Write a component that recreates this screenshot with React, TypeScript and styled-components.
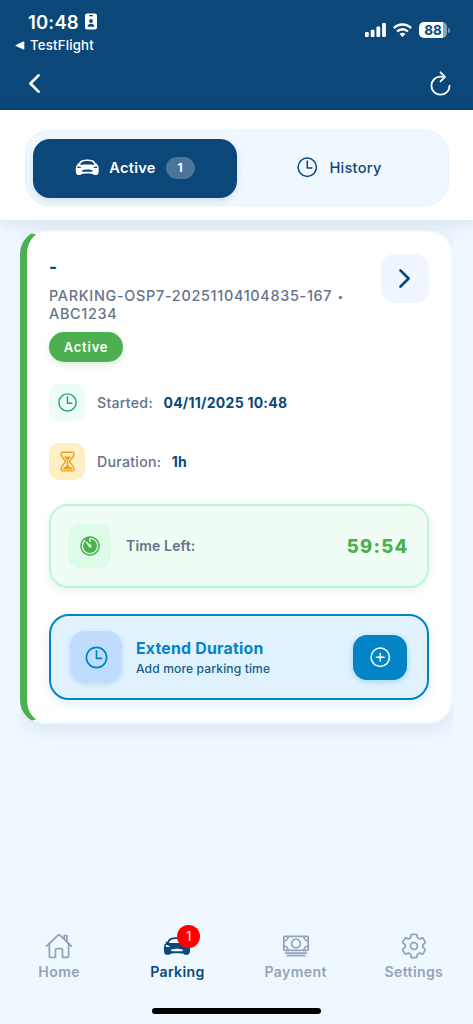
import React from 'react';
import styled, { createGlobalStyle } from 'styled-components';
import {
  IoAddCircleOutline,
  IoCarSport,
  IoCashOutline,
  IoChevronBack,
  IoChevronForward,
  IoHomeOutline,
  IoHourglassOutline,
  IoRefreshOutline,
  IoSettingsOutline,
  IoTimeOutline,
  IoTimer,
} from 'react-icons/io5';

const navy = '#0c477a';
const green = '#4caf50';
const blue = '#0284c7';
const slate = '#64748b';

const GlobalStyle = createGlobalStyle`
  * { box-sizing: border-box; }
  body { margin: 0; background: #f0f8ff; }
  svg { display: block; flex: none; }
`;

const Screen = styled.div`
  display: flex;
  flex-direction: column;
  width: 473px;
  height: 1024px;
  overflow: hidden;
  background: #f0f8ff;
  color: ${navy};
  font-family: Inter, 'Liberation Sans', sans-serif;
`;

const Header = styled.header`
  flex: none;
  height: 110px;
  background: ${navy};
  border-bottom: 1px solid #0a3d69;
  color: #fff;
`;

const StatusBar = styled.div`
  display: flex;
  justify-content: space-between;
  height: 58px;
  padding: 11px 23px 0 15px;
`;

const Clock = styled.div`
  display: flex;
  align-items: center;
  gap: 6px;
  height: 21px;
  padding-left: 13px;
  font-size: 18.5px;
  font-weight: 600;
  letter-spacing: 0.15px;
`;

const BackToApp = styled.div`
  display: flex;
  align-items: center;
  gap: 5px;
  height: 18px;
  margin-top: 4px;
  font-size: 13.2px;
  font-weight: 500;
  letter-spacing: 0.2px;
`;

const Indicators = styled.div`
  display: flex;
  align-items: center;
  gap: 7px;
  height: 38px;
`;

const Battery = styled.div`
  display: flex;
  align-items: center;
  gap: 1px;
`;

const BatteryBody = styled.div`
  width: 28px;
  height: 16px;
  border-radius: 5px;
  background: linear-gradient(90deg, #fff 87%, #88a6c0 87%);
  color: ${navy};
  font-size: 13.5px;
  font-weight: 700;
  line-height: 16px;
  text-align: center;
`;

const BatteryTip = styled.div`
  width: 2px;
  height: 5px;
  border-radius: 0 2px 2px 0;
  background: #7898b5;
`;

const NavRow = styled.div`
  display: flex;
  align-items: center;
  justify-content: space-between;
  height: 51px;
  padding: 0 18px 0 20px;
`;

const TabArea = styled.div`
  position: relative;
  flex: none;
  height: 110px;
  padding: 20px 24.5px 0;
  background: #fff;
  box-shadow: 0 5px 14px rgba(12, 71, 122, 0.1);
`;

const TabTrack = styled.div`
  display: flex;
  height: 76px;
  padding: 7.5px;
  border: 1px solid #e3f1fb;
  border-radius: 24px;
  background: #f0f8ff;
`;

const Tab = styled.button<{ $active?: boolean }>`
  display: flex;
  flex: 1;
  align-items: center;
  justify-content: center;
  gap: 10px;
  padding: 0 0 1px;
  border: 0;
  border-radius: 17px;
  background: ${(p) => (p.$active ? navy : 'transparent')};
  box-shadow: ${(p) => (p.$active ? '0 3px 7px rgba(12, 71, 122, 0.14)' : 'none')};
  color: ${(p) => (p.$active ? '#fff' : navy)};
  font-family: inherit;
  font-size: 14.6px;
  font-weight: ${(p) => (p.$active ? 600 : 500)};
  letter-spacing: 0.25px;
`;

const Count = styled.span`
  width: 29px;
  height: 22px;
  border-radius: 11px;
  background: rgba(255, 255, 255, 0.25);
  font-size: 12px;
  font-weight: 700;
  line-height: 22px;
`;

const Content = styled.main`
  flex: 1;
  padding: 10px 20px 0;
`;

const CardClip = styled.div`
  clip-path: inset(-30px 0);
`;

const Card = styled.section`
  height: 494px;
  padding: 22px 22.5px 0 22px;
  border: 2px solid #f0f8ff;
  border-left: 7px solid ${green};
  border-radius: 24px;
  background: #fff;
  background-clip: padding-box;
  box-shadow: 0 5px 18px rgba(12, 71, 122, 0.11);
`;

const CardTop = styled.div`
  display: flex;
  justify-content: space-between;
`;

const Place = styled.div`
  height: 33px;
  padding-top: 2px;
  font-size: 17px;
  font-weight: 800;
  line-height: 22px;
`;

const Reference = styled.div`
  color: ${slate};
  font-size: 14.4px;
  font-weight: 500;
  line-height: 18px;
  letter-spacing: 0.7px;
`;

const ReferenceDot = styled.span`
  display: inline-block;
  margin-left: 1px;
  font-size: 10px;
  line-height: 10px;
  vertical-align: 1px;
`;

const StatusPill = styled.div`
  width: 74px;
  height: 30px;
  margin-top: 9px;
  border-radius: 15px;
  background: ${green};
  box-shadow: 0 3px 7px rgba(76, 175, 80, 0.2);
  color: #fff;
  font-size: 13px;
  font-weight: 600;
  line-height: 30px;
  letter-spacing: 0.8px;
  text-align: center;
`;

const OpenButton = styled.button`
  display: flex;
  align-items: center;
  justify-content: center;
  width: 48px;
  height: 49px;
  padding: 0;
  border: 0;
  border-radius: 14px;
  background: #eff6ff;
  color: ${navy};
`;

const Facts = styled.div`
  display: flex;
  flex-direction: column;
  gap: 22px;
  margin-top: 22px;
`;

const Fact = styled.div`
  display: flex;
  align-items: center;
  height: 37px;
  font-size: 14.2px;
  line-height: 18px;
  letter-spacing: 0.25px;
`;

const IconTile = styled.div<{ $w: number; $h: number; $r: number; $bg: string; $fg: string; $raised?: boolean }>`
  display: flex;
  flex: none;
  align-items: center;
  justify-content: center;
  width: ${(p) => p.$w}px;
  height: ${(p) => p.$h}px;
  border-radius: ${(p) => p.$r}px;
  background: ${(p) => p.$bg};
  color: ${(p) => p.$fg};
  box-shadow: ${(p) => (p.$raised ? '0 2px 5px rgba(12, 71, 122, 0.13)' : 'none')};
`;

const Label = styled.span`
  margin-left: 12px;
  color: ${slate};
  font-weight: 500;
`;

const Value = styled.span`
  margin-left: 10.5px;
  font-size: 14px;
  font-weight: 700;
`;

const TimeLeft = styled.div`
  display: flex;
  align-items: center;
  height: 84px;
  margin-top: 24px;
  padding: 0 18px 0 17px;
  border: 2px solid #bbf7d0;
  border-radius: 19px;
  background: #f0fdf4;
  box-shadow: 0 3px 9px rgba(76, 175, 80, 0.12);
`;

const TimeLeftLabel = styled.span`
  margin-left: 15px;
  padding-bottom: 1px;
  color: ${slate};
  font-size: 14px;
  font-weight: 600;
  letter-spacing: 0.15px;
`;

const Countdown = styled.span`
  margin-left: auto;
  color: ${green};
  font-size: 18.4px;
  font-weight: 800;
  letter-spacing: 1.3px;
`;

const Extend = styled.div`
  display: flex;
  align-items: center;
  height: 86px;
  margin-top: 26px;
  padding: 0 20px 0 19px;
  border: 2px solid ${blue};
  border-radius: 20px;
  background: #e0f2fe;
  box-shadow: 0 4px 11px rgba(2, 132, 199, 0.13);
`;

const ExtendText = styled.div`
  margin: 2px 0 0 14px;
`;

const ExtendTitle = styled.div`
  color: ${blue};
  font-size: 15.8px;
  font-weight: 700;
  line-height: 20px;
  letter-spacing: 0.25px;
`;

const ExtendHint = styled.div`
  color: #155e87;
  font-size: 12.1px;
  font-weight: 500;
  line-height: 19px;
  letter-spacing: 0.12px;
`;

const AddButton = styled.button`
  display: flex;
  align-items: center;
  justify-content: center;
  width: 53.5px;
  height: 45px;
  margin-left: auto;
  padding: 0;
  border: 0;
  border-radius: 14px;
  background: ${blue};
  box-shadow: 0 2px 6px rgba(2, 132, 199, 0.25);
  color: #fff;
`;

const BottomNav = styled.nav`
  display: flex;
  flex: none;
  height: 76px;
`;

const NavItem = styled.a<{ $active?: boolean }>`
  display: flex;
  flex: 1;
  flex-direction: column;
  align-items: center;
  color: ${(p) => (p.$active ? navy : '#94a3b8')};
  font-size: 14.1px;
  font-weight: 600;
  line-height: 20px;
  letter-spacing: 0.35px;
`;

const NavIcon = styled.span`
  position: relative;
  margin-bottom: 2px;
`;

const Badge = styled.span`
  position: absolute;
  top: -7px;
  right: -9px;
  width: 23px;
  height: 23px;
  border-radius: 50%;
  background: #ff0000;
  color: #fff;
  font-size: 12.5px;
  font-weight: 400;
  line-height: 23px;
  letter-spacing: 0;
  text-align: center;
`;

const HomeIndicator = styled.div`
  flex: none;
  width: 169px;
  height: 6px;
  margin: 0 auto 10px;
  border-radius: 3px;
  background: #000;
`;

function FocusBadge() {
  return (
    <svg width="12" height="17" viewBox="0 0 12 17">
      <rect width="12" height="16" y="0.5" rx="2.2" fill="#fff" />
      <rect x="4" y="2" width="4" height="1.3" rx="0.6" fill={navy} />
      <circle cx="6" cy="8" r="1.9" fill={navy} />
      <path d="M2.6 13.8c0-2 1.4-3 3.4-3s3.4 1 3.4 3z" fill={navy} />
    </svg>
  );
}

function Signal() {
  return (
    <svg width="21" height="14" viewBox="0 0 21 14" fill="#fff">
      <rect x="0" y="9" width="3.8" height="5" rx="1.1" />
      <rect x="5.7" y="6.7" width="3.8" height="7.3" rx="1.1" />
      <rect x="11.4" y="3.6" width="3.8" height="10.4" rx="1.1" />
      <rect x="17.1" y="0" width="3.8" height="14" rx="1.1" />
    </svg>
  );
}

function Wifi() {
  return (
    <svg width="19" height="14" viewBox="0 0 19 14" fill="none" stroke="#fff" strokeWidth="2.4">
      <path d="M0.9 5.1a12.2 12.2 0 0 1 17.2 0" />
      <path d="M4.1 8.5a7.7 7.7 0 0 1 10.8 0" />
      <path d="M9.5 14 6.6 11.1a4.1 4.1 0 0 1 5.8 0z" fill="#fff" stroke="none" />
    </svg>
  );
}

export default function App() {
  return (
    <Screen>
      <GlobalStyle />
      <Header>
        <StatusBar>
          <div>
            <Clock>
              10:48
              <FocusBadge />
            </Clock>
            <BackToApp>
              <svg width="10" height="9" viewBox="0 0 10 9">
                <path d="M.8 4.1 8.4.6q.9-.3.9.6v6.6q0 .9-.9.6L.8 4.9q-.6-.4 0-.8z" fill="#fff" />
              </svg>
              TestFlight
            </BackToApp>
          </div>
          <Indicators>
            <Signal />
            <Wifi />
            <Battery>
              <BatteryBody>88</BatteryBody>
              <BatteryTip />
            </Battery>
          </Indicators>
        </StatusBar>
        <NavRow>
          <IoChevronBack size={29} />
          <IoRefreshOutline size={29} />
        </NavRow>
      </Header>

      <TabArea>
        <TabTrack>
          <Tab $active>
            <IoCarSport size={24.5} />
            Active
            <Count>1</Count>
          </Tab>
          <Tab>
            <IoTimeOutline size={24.5} />
            History
          </Tab>
        </TabTrack>
      </TabArea>

      <Content>
        <CardClip>
          <Card>
            <CardTop>
              <div>
                <Place>-</Place>
                <Reference>
                  PARKING-OSP7-20251104104835-167 <ReferenceDot>•</ReferenceDot>
                  <br />
                  ABC1234
                </Reference>
                <StatusPill>Active</StatusPill>
              </div>
              <OpenButton>
                <IoChevronForward size={29} />
              </OpenButton>
            </CardTop>

            <Facts>
              <Fact>
                <IconTile $w={36} $h={37} $r={10} $bg="#ecfdf5" $fg="#1f9d72">
                  <IoTimeOutline size={23} />
                </IconTile>
                <Label>Started:</Label>
                <Value>04/11/2025 10:48</Value>
              </Fact>
              <Fact>
                <IconTile $w={36} $h={37} $r={10} $bg="#fef0c3" $fg="#f0a020">
                  <IoHourglassOutline size={23} />
                </IconTile>
                <Label>Duration:</Label>
                <Value>1h</Value>
              </Fact>
            </Facts>

            <TimeLeft>
              <IconTile $w={43} $h={44} $r={12} $bg="#dcfce7" $fg={green}>
                <IoTimer size={24} />
              </IconTile>
              <TimeLeftLabel>Time Left:</TimeLeftLabel>
              <Countdown>59:54</Countdown>
            </TimeLeft>

            <Extend>
              <IconTile $w={52} $h={52} $r={15} $bg="#bfdbfe" $fg={blue} $raised>
                <IoTimeOutline size={27} />
              </IconTile>
              <ExtendText>
                <ExtendTitle>Extend Duration</ExtendTitle>
                <ExtendHint>Add more parking time</ExtendHint>
              </ExtendText>
              <AddButton>
                <IoAddCircleOutline size={24.5} />
              </AddButton>
            </Extend>
          </Card>
        </CardClip>
      </Content>

      <BottomNav>
        <NavItem>
          <NavIcon>
            <IoHomeOutline size={28} />
          </NavIcon>
          Home
        </NavItem>
        <NavItem $active>
          <NavIcon>
            <IoCarSport size={28} />
            <Badge>1</Badge>
          </NavIcon>
          Parking
        </NavItem>
        <NavItem>
          <NavIcon>
            <IoCashOutline size={28} />
          </NavIcon>
          Payment
        </NavItem>
        <NavItem>
          <NavIcon>
            <IoSettingsOutline size={28} />
          </NavIcon>
          Settings
        </NavItem>
      </BottomNav>
      <HomeIndicator />
    </Screen>
  );
}
